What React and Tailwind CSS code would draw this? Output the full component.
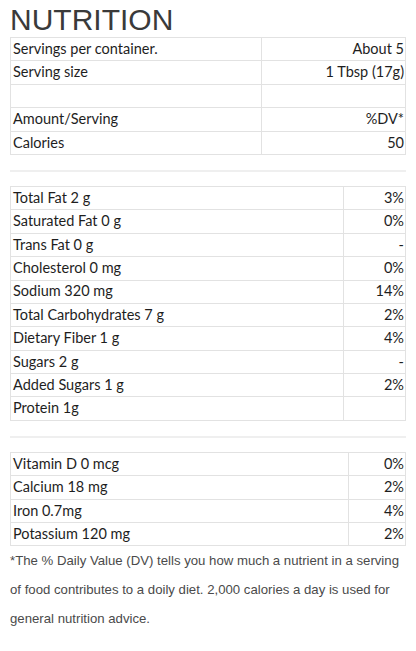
import React from 'react';

const serving = [
  ['Servings per container.', 'About 5'],
  ['Serving size', '1 Tbsp (17g)'],
  ['', ''],
  ['Amount/Serving', '%DV*'],
  ['Calories', '50'],
];

const nutrients = [
  ['Total Fat 2 g', '3%'],
  ['Saturated Fat 0 g', '0%'],
  ['Trans Fat 0 g', '-'],
  ['Cholesterol 0 mg', '0%'],
  ['Sodium 320 mg', '14%'],
  ['Total Carbohydrates 7 g', '2%'],
  ['Dietary Fiber 1 g', '4%'],
  ['Sugars 2 g', '-'],
  ['Added Sugars 1 g', '2%'],
  ['Protein 1g', ''],
];

const minerals = [
  ['Vitamin D 0 mcg', '0%'],
  ['Calcium 18 mg', '2%'],
  ['Iron 0.7mg', '4%'],
  ['Potassium 120 mg', '2%'],
];

function FactTable({ rows, leftWidth }) {
  return (
    <table className="w-full border-collapse table-fixed">
      <colgroup>
        <col className={leftWidth} />
        <col />
      </colgroup>
      <tbody>
        {rows.map(([label, value], i) => (
          <tr key={i} className="h-[23.4px]">
            <td className="border border-[#e2e2e2] px-[2px] py-0 text-left leading-none">{label}</td>
            <td className="border border-[#e2e2e2] px-[1px] py-0 text-right leading-none">{value}</td>
          </tr>
        ))}
      </tbody>
    </table>
  );
}

function App() {
  return (
    <div className="bg-white min-h-screen w-[416px] px-[10px] pt-[3px]">
      <h1 className="font-['Liberation_Sans',Arial,sans-serif] text-[30px] leading-[34px] text-[#3a3a3a] font-normal">
        NUTRITION
      </h1>

      <div className="font-['Lato','Noto_Sans',sans-serif] text-[14.5px] text-[#1e1e1e]">
        <FactTable rows={serving} leftWidth="w-[251px]" />
        <div className="mt-[15px] mb-[14px] border-t-2 border-[#efefef]" />
        <FactTable rows={nutrients} leftWidth="w-[333px]" />
        <div className="mt-[15px] mb-[14px] border-t-2 border-[#efefef]" />
        <FactTable rows={minerals} leftWidth="w-[338px]" />
      </div>

      <p className="font-['Liberation_Sans',Arial,sans-serif] text-[13.2px] leading-[29px] text-[#4a4a4a]">
        *The % Daily Value (DV) tells you how much a nutrient in a serving of food contributes to a doily diet. 2,000 calories a day is used for general nutrition advice.
      </p>
    </div>
  );
}

export default App;
